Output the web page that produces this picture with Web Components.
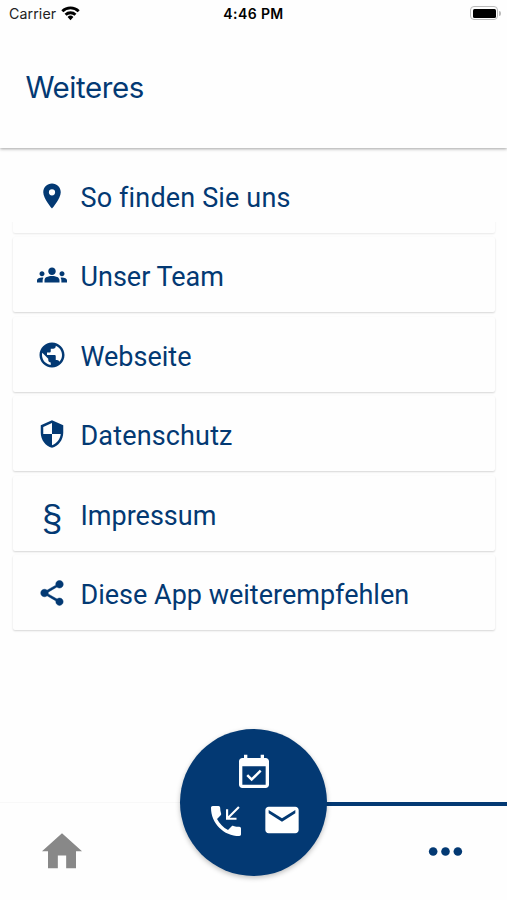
<!DOCTYPE html>
<html lang="de">
<head>
<meta charset="utf-8">
<title>Weiteres</title>
<style>
html, body { margin: 0; padding: 0; background: #fefefe; }
body { font-family: Roboto, "Liberation Sans", sans-serif; --brand: #033973; color: var(--brand); }
</style>
</head>
<body>
<more-screen></more-screen>
<script>
const define = (name, markup) => {
  const t = document.createElement('template');
  t.innerHTML = markup;
  customElements.define(name, class extends HTMLElement {
    constructor() {
      super();
      this.attachShadow({ mode: 'open' }).append(t.content.cloneNode(true));
    }
  });
};

const PATHS = {
  pin: '<path d="M12 2C8.13 2 5 5.13 5 9c0 5.25 7 13 7 13s7-7.75 7-13c0-3.87-3.13-7-7-7zm0 9.5a2.5 2.5 0 1 1 0-5 2.5 2.5 0 0 1 0 5z"/>',
  groups: '<path d="M12 12.75c1.63 0 3.07.39 4.24.9 1.08.48 1.76 1.56 1.76 2.73V18H6v-1.61c0-1.18.68-2.26 1.76-2.73 1.17-.52 2.61-.91 4.24-.91zM4 13c1.1 0 2-.9 2-2s-.9-2-2-2-2 .9-2 2 .9 2 2 2zm1.13 1.1c-.37-.06-.74-.1-1.13-.1-.99 0-1.93.21-2.78.58C.48 14.9 0 15.62 0 16.43V18h4.5v-1.61c0-.83.23-1.61.63-2.29zM20 13c1.1 0 2-.9 2-2s-.9-2-2-2-2 .9-2 2 .9 2 2 2zm4 3.43c0-.81-.48-1.53-1.22-1.85-.85-.37-1.79-.58-2.78-.58-.39 0-.76.04-1.13.1.4.68.63 1.46.63 2.29V18H24v-1.57zM12 6c1.66 0 3 1.34 3 3s-1.34 3-3 3-3-1.34-3-3 1.34-3 3-3z"/>',
  globe: '<path d="M12 2C6.48 2 2 6.48 2 12s4.48 10 10 10 10-4.48 10-10S17.52 2 12 2zm-1 17.93c-3.95-.49-7-3.85-7-7.93 0-.62.08-1.21.21-1.79L9 15v1c0 1.1.9 2 2 2v1.93zm6.9-2.54c-.26-.81-1-1.39-1.9-1.39h-1v-3c0-.55-.45-1-1-1H8v-2h2c.55 0 1-.45 1-1V7h2c1.1 0 2-.9 2-2v-.41c2.93 1.19 5 4.06 5 7.41 0 2.08-.8 3.97-2.1 5.39z"/>',
  shield: '<path d="M12 1L3 5v6c0 5.55 3.84 10.74 9 12 5.16-1.26 9-6.45 9-12V5l-9-4zm0 10.99h7c-.53 4.12-3.28 7.79-7 8.94V12H5V6.3l7-3.11v8.8z"/>',
  share: '<path d="M18 16.08c-.76 0-1.44.3-1.96.77L8.91 12.7c.05-.23.09-.46.09-.7s-.04-.47-.09-.7l7.05-4.11c.54.5 1.25.81 2.04.81 1.66 0 3-1.34 3-3s-1.34-3-3-3-3 1.34-3 3c0 .24.04.47.09.7L8.04 9.81C7.5 9.31 6.79 9 6 9c-1.66 0-3 1.34-3 3s1.34 3 3 3c.79 0 1.5-.31 2.04-.81l7.12 4.16c-.05.21-.08.43-.08.65 0 1.61 1.31 2.92 2.92 2.92s2.92-1.31 2.92-2.92-1.31-2.92-2.92-2.92z" stroke="currentColor" stroke-width=".4"/>',
  calendar: '<path d="M16.53 11.06L15.47 10l-4.88 4.88-2.12-2.12-1.06 1.06L10.59 17l5.94-5.94zM19 3h-1V1h-2v2H8V1H6v2H5c-1.11 0-1.99.9-1.99 2L3 19c0 1.1.89 2 2 2h14c1.1 0 2-.9 2-2V5c0-1.1-.9-2-2-2zm0 16H5V8h14v11z"/>',
  call: '<path d="M20 15.5c-1.25 0-2.45-.2-3.57-.57-.35-.11-.74-.03-1.02.24l-2.2 2.2c-2.83-1.44-5.15-3.75-6.59-6.58l2.2-2.21c.28-.27.36-.66.25-1.01C8.7 6.45 8.5 5.25 8.5 4c0-.55-.45-1-1-1H4c-.55 0-1 .45-1 1 0 9.39 7.61 17 17 17 .55 0 1-.45 1-1v-3.5c0-.55-.45-1-1-1zM12 11.2h6.3V10h-4.1l6-6-.9-.9-6 6V5H12z"/>',
  mail: '<path d="M20 4H4c-1.1 0-1.99.9-1.99 2L2 18c0 1.1.9 2 2 2h16c1.1 0 2-.9 2-2V6c0-1.1-.9-2-2-2zm0 4l-8 5-8-5V6l8 5 8-5v2z"/>',
  home: '<path d="M12 1.4L0 12.2h3.6v10.2h5.9v-7.7h5v7.7h5.9V12.2H24z"/>',
  dots: '<circle cx="4.4" cy="12" r="2.65"/><circle cx="12" cy="12" r="2.65"/><circle cx="19.6" cy="12" r="2.65"/>',
  wifi: '<path d="M12 20.5l3.7-4.1a5.3 5.3 0 0 0-7.4 0zM2.9 10.4l-2.5-2.6a16.8 16.8 0 0 1 23.2 0l-2.5 2.6a13.2 13.2 0 0 0-18.2 0zM7 14.8l-2.5-2.6a11 11 0 0 1 15 0L17 14.8a7.4 7.4 0 0 0-10 0z"/>'
};

customElements.define('app-icon', class extends HTMLElement {
  constructor() {
    super();
    this.attachShadow({ mode: 'open' }).innerHTML = `
      <style>:host{display:block;width:var(--size,30px);height:var(--size,30px);flex:none}
      svg{display:block;width:100%;height:100%;fill:currentColor}</style>
      <svg viewBox="0 0 24 24" aria-hidden="true">${PATHS[this.getAttribute('name')]}</svg>`;
  }
});

define('status-bar', `
<style>
:host{display:grid;grid-template-columns:1fr auto 1fr;align-items:center;height:27px;padding:0 6px 0 9px;color:#222;font:14.2px/27px Inter,"Liberation Sans",sans-serif}
.left{display:flex;align-items:center;gap:5px}
.left app-icon{--size:19px;color:#000;margin-top:-1px}
.carrier{letter-spacing:.1px}
.time{font-weight:600;font-size:14px;letter-spacing:.4px;color:#000;margin-right:3px}
.battery{justify-self:end;display:flex;align-items:center;gap:1px;margin-top:-1px}
.shell{box-sizing:border-box;width:28px;height:14px;border:1.5px solid #bbb;border-radius:4px;padding:1.5px}
.fill{height:100%;background:#000;border-radius:1.5px}
.cap{width:2px;height:5px;background:#bbb;border-radius:0 2px 2px 0}
</style>
<div class="left"><span class="carrier">Carrier</span><app-icon name="wifi"></app-icon></div>
<span class="time">4:46 PM</span>
<div class="battery"><div class="shell"><div class="fill"></div></div><div class="cap"></div></div>`);

define('page-header', `
<style>
:host{display:flex;align-items:center;box-sizing:border-box;height:121px;padding:0 26px 2px 25.5px;box-shadow:0 1px 3px rgba(0,0,0,.36);clip-path:inset(0 0 -8px 0)}
h1{margin:0;font:400 29.5px/36px Inter,"Liberation Sans",sans-serif;letter-spacing:-.45px}
</style>
<h1><slot></slot></h1>`);

define('menu-row', `
<style>
:host{display:grid;grid-template-columns:30px 1fr;column-gap:13.5px;align-items:center;box-sizing:border-box;height:75px;padding:1px 24px 0;background:#fefefe;border-radius:2px;box-shadow:var(--row-shadow,0 1px 2px rgba(0,0,0,.16))}
.icon{display:grid;place-items:center}
.label{font-size:27px;line-height:36px;white-space:nowrap;font-variant-ligatures:none;letter-spacing:var(--tracking,0);padding-top:4px}
</style>
<div class="icon"><slot name="icon"></slot></div>
<span class="label"><slot></slot></span>`);

define('menu-list', `
<style>:host{display:flex;flex-direction:column;gap:4.4px;padding:10px 12px 0 13px}</style><slot></slot>`);

define('quick-actions', `
<style>
:host{display:grid;grid-template-columns:40px 40px;column-gap:15.5px;justify-content:center;align-content:start;box-sizing:border-box;width:147px;height:147px;padding-top:24px;border-radius:50%;background:var(--brand);color:#fff;box-shadow:0 2px 5px rgba(0,0,0,.25);--size:40px}
.top{grid-column:1/3;justify-self:center;margin-bottom:8px}
.mail{margin-top:-1px}
</style>
<app-icon class="top" name="calendar"></app-icon>
<app-icon name="call"></app-icon><app-icon class="mail" name="mail"></app-icon>`);

define('bottom-nav', `
<style>
:host{position:relative;display:grid;grid-template-columns:123.5px 1fr 123px;height:98px}
.tab{display:grid;place-items:center;box-sizing:border-box}
.home{color:#888;border-top:1px solid #f8f8f8;padding-bottom:2px}
.home app-icon{--size:40px}
.more{border-top:4px solid var(--brand);padding-bottom:4px}
.more app-icon{--size:39px}
.mid{display:grid;grid-template-columns:1fr 1fr}
.left{border-top:1px solid #f8f8f8}
.line{border-top:4px solid var(--brand)}
quick-actions{position:absolute;left:180.4px;top:-73px}
</style>
<div class="tab home"><app-icon name="home"></app-icon></div>
<div class="mid"><div class="left"></div><div class="line"></div></div>
<div class="tab more"><app-icon name="dots"></app-icon></div>
<quick-actions></quick-actions>`);

define('more-screen', `
<style>
:host{display:flex;flex-direction:column;width:507px;height:900px;overflow:hidden}
menu-list{flex:1}
.first{--tracking:.15px;--row-shadow:0 1px 2px rgba(0,0,0,.09);clip-path:polygon(20px 0,calc(100% - 20px) 0,calc(100% - 20px) 64px,calc(100% + 4px) 64px,calc(100% + 4px) calc(100% + 4px),-4px calc(100% + 4px),-4px 64px,20px 64px)}
.privacy{--tracking:.15px}
.sec{font:37px/36px "Liberation Sans",sans-serif;padding-top:10px}
</style>
<status-bar></status-bar>
<page-header>Weiteres</page-header>
<menu-list>
<menu-row class="first"><app-icon slot="icon" name="pin"></app-icon>So finden Sie uns</menu-row>
<menu-row><app-icon slot="icon" name="groups"></app-icon>Unser Team</menu-row>
<menu-row><app-icon slot="icon" name="globe"></app-icon>Webseite</menu-row>
<menu-row class="privacy"><app-icon slot="icon" name="shield"></app-icon>Datenschutz</menu-row>
<menu-row><span class="sec" slot="icon">§</span>Impressum</menu-row>
<menu-row><app-icon slot="icon" name="share"></app-icon>Diese App weiterempfehlen</menu-row>
</menu-list>
<bottom-nav></bottom-nav>`);
</script>
</body>
</html>
